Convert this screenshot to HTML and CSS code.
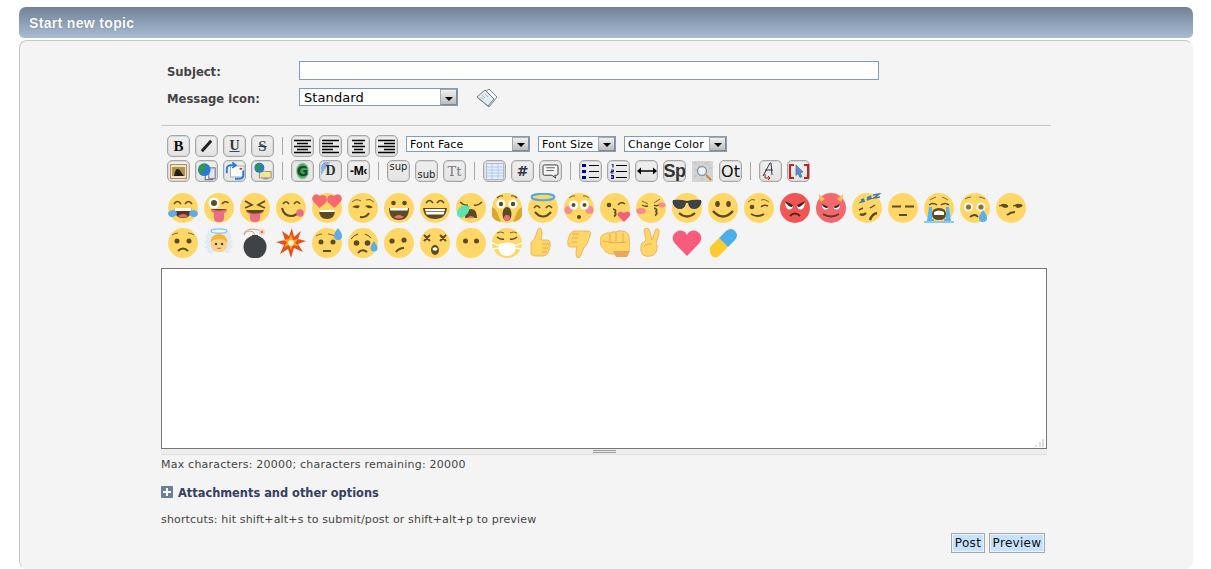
FILE: index.html
```html
<!DOCTYPE html>
<html lang="en">
<head>
<meta charset="utf-8">
<title>Start new topic</title>
<link rel="stylesheet" href="styles.css">
</head>
<body>
<svg class="defs" width="0" height="0" aria-hidden="true">
<defs>
<circle id="f" cx="15" cy="15" r="15" fill="#ffd766"/>
<circle id="fr" cx="15" cy="15" r="15" fill="#f25555"/>
<symbol id="e1" viewBox="0 0 30 30"><use href="#f"/><path d="M6 11q3.500-5 7 0M17 11q3.500-5 7 0" stroke="#5e4a22" stroke-width="1.500" fill="none"/><path d="M6.500 15h17q0 10-8.500 10t-8.500-10z" fill="#4f3a1c"/><path d="M6.500 15h17l-.6 3h-15.800z" fill="#fff"/><path d="M10 23q5-4 10 0q-5 3-10 0z" fill="#e8657b"/><path d="M0 21q0-3 4-4q4 0 5 3q-1 4-5 4q-3 0-4-3zM30 21q0-3-4-4q-4 0-5 3q1 4 5 4q3 0 4-3z" fill="#5cade8"/></symbol>
<symbol id="e2" viewBox="0 0 30 30"><use href="#f"/><circle cx="10" cy="10" r="5.500" fill="#fff"/><circle cx="10" cy="10" r="3" fill="#5e4a22"/><path d="M18 11q3-4 6.500-1" stroke="#5e4a22" stroke-width="1.600" fill="none"/><path d="M7 16h16q0 3-3 4v5q0 4-5 4t-5-4v-5q-3-1-3-4z" fill="#ea6c85"/><path d="M7 16h16q-8 3-16 0z" fill="#5e4a22"/></symbol>
<symbol id="e3" viewBox="0 0 30 30"><use href="#f"/><path d="M5 8l7 4-7 3M25 8l-7 4 7 3" stroke="#5e4a22" stroke-width="1.700" fill="none"/><path d="M6 17h18q0 3-4 4v4q0 4-5 4t-5-4v-4q-4-1-4-4z" fill="#ea6c85"/><path d="M6 17h18q-1 2-4 3q-5 1-10 0q-3-1-4-3z" fill="#5e4a22"/></symbol>
<symbol id="e4" viewBox="0 0 30 30"><use href="#f"/><path d="M7 11q3-4.500 6 0M18 11q3-4.500 6 0" stroke="#5e4a22" stroke-width="1.600" fill="none"/><path d="M6 15q2 8 9 8q6 0 9-6" stroke="#5e4a22" stroke-width="2.200" fill="none"/><circle cx="24" cy="20" r="3.800" fill="#ea6c85"/></symbol>
<symbol id="e5" viewBox="0 0 30 30"><use href="#f"/><path d="M7 17h16q0 9-8 9t-8-9z" fill="#5e4a22"/><path d="M7 17h16l-.5 2h-15z" fill="#fff"/><path d="M7.500 15L1.500 9q-3-4 .5-7q3-2 6 1q3-2 5.500 0q2.500 3 .5 6.500zM22.500 15l6-6q3-4-.5-7q-3-2-6 1q-3-2-5.500 0q-2.500 3-.5 6.500z" fill="#f66a6f"/></symbol>
<symbol id="e6" viewBox="0 0 30 30"><use href="#f"/><path d="M4 9q4-4 9-1M18 7q4-2 8 2" stroke="#5e4a22" stroke-width=".8" fill="none"/><path d="M4 14q4-3 8-1q-2 3-4 2zM17 13q4-2 8 1q-3 2-5 1z" fill="#5e4a22"/><path d="M12 24q6 1 9-4" stroke="#5e4a22" stroke-width="2" fill="none"/></symbol>
<symbol id="e7" viewBox="0 0 30 30"><use href="#f"/><circle cx="9.500" cy="10" r="2.300" fill="#5e4a22"/><circle cx="20.500" cy="10" r="2.300" fill="#5e4a22"/><path d="M5 15h20q0 12-10 12t-10-12z" fill="#5e4a22"/><path d="M6 15h18l-.4 2.500h-17.200z" fill="#fff"/><path d="M10 24q5-4 10 0q-5 3-10 0z" fill="#ea6c85"/></symbol>
<symbol id="e8" viewBox="0 0 30 30"><use href="#f"/><path d="M6 10q3.500-5 7 0M17 10q3.500-5 7 0" stroke="#5e4a22" stroke-width="1.700" fill="none"/><path d="M3 15h24q-1 11-12 11t-12-11z" fill="#5e4a22"/><path d="M5 16h20q-.5 4-1.500 5.500h-17q-1-1.500-1.500-5.500z" fill="#fff"/><path d="M5 18.500h20" stroke="#5e4a22" stroke-width=".7"/></symbol>
<symbol id="e9" viewBox="0 0 30 30"><use href="#f"/><path d="M4 9q4 4 8 3M18 12q4 1 8-3" stroke="#5e4a22" stroke-width="1.500" fill="none"/><path d="M9 25q0-9 6-9t6 9z" fill="#5e4a22"/><path d="M11 25q4-4 8 0z" fill="#ea6c85"/><path d="M1 21q0-6 5-8q5-1 8 0q-1 7-4 9q-4 4-7 2q-2-1-2-3z" fill="#5de2b0"/></symbol>
<symbol id="e10" viewBox="0 0 30 30"><use href="#f"/><path d="M5 5q3-3 6-2M19 3q3-1 6 2" stroke="#5e4a22" stroke-width="1.200" fill="none"/><circle cx="9" cy="11" r="4.500" fill="#fff"/><circle cx="21" cy="11" r="4.500" fill="#fff"/><circle cx="9" cy="11" r="2.200" fill="#5e4a22"/><circle cx="21" cy="11" r="2.200" fill="#5e4a22"/><ellipse cx="15" cy="21" rx="4.500" ry="7" fill="#5e4a22"/><ellipse cx="15" cy="25" rx="3" ry="3" fill="#ea6c85"/><path d="M0 14q3 1 5 5l4 10q-7-1-9-6zM30 14q-3 1-5 5l-4 10q7-1 9-6z" fill="#dca62f"/></symbol>
<symbol id="e11" viewBox="0 0 30 30"><use href="#f"/><path d="M6 15q3-4.500 6 0M18 15q3-4.500 6 0" stroke="#5e4a22" stroke-width="1.600" fill="none"/><path d="M7 19q8 9 16 0" stroke="#5e4a22" stroke-width="2" fill="none"/><ellipse cx="15" cy="4" rx="11.500" ry="3.200" fill="none" stroke="#4daae8" stroke-width="2"/></symbol>
<symbol id="e12" viewBox="0 0 30 30"><use href="#f"/><path d="M5 5q3-3 6-2M19 3q3-1 6 2" stroke="#5e4a22" stroke-width=".8" fill="none"/><circle cx="4.500" cy="17" r="4" fill="#f88c8c"/><circle cx="25.500" cy="17" r="4" fill="#f88c8c"/><circle cx="9.500" cy="12" r="4.500" fill="#fff"/><circle cx="20.500" cy="12" r="4.500" fill="#fff"/><circle cx="9.500" cy="12" r="2" fill="#5e4a22"/><circle cx="20.500" cy="12" r="2" fill="#5e4a22"/><circle cx="15" cy="24" r="2" fill="#5e4a22"/></symbol>
<symbol id="e13" viewBox="0 0 30 30"><use href="#f"/><circle cx="9" cy="12" r="2.300" fill="#5e4a22"/><path d="M18 12q3-4 7-1" stroke="#5e4a22" stroke-width="1.500" fill="none"/><path d="M13 16q4 1 2 3.500q2 2 -1 4" stroke="#5e4a22" stroke-width="1.800" fill="none"/><path d="M24 29l-5-5q-2.500-3 0-5q2.500-1 5 1q2.500-2 5-1q2.500 2 0 5z" fill="#f25f78"/></symbol>
<symbol id="e14" viewBox="0 0 30 30"><use href="#f"/><path d="M6 8l6 3M24 6l-6 4" stroke="#5e4a22" stroke-width=".8" fill="none"/><path d="M6 12q3 2 6 1M18 12q3 2 6-1" stroke="#5e4a22" stroke-width="1.500" fill="none"/><ellipse cx="5" cy="18" rx="4.800" ry="3" fill="#f88c8c"/><ellipse cx="26" cy="12" rx="3.500" ry="2.500" fill="#f88c8c"/><path d="M18 15q4 1 2 3.500q2 2 -1 4" stroke="#5e4a22" stroke-width="1.800" fill="none"/></symbol>
<symbol id="e15" viewBox="0 0 30 30"><use href="#f"/><path d="M1 7q7-1 14 1q7-2 14-1q1 2 0 4q-2 5-7 5q-5 0-6-6h-2q-1 6-6 6q-5 0-7-5q-1-2 0-4z" fill="#3e4347"/><path d="M7 20q8 7 16 0" stroke="#5e4a22" stroke-width="2.200" fill="none"/></symbol>
<symbol id="e16" viewBox="0 0 30 30"><use href="#f"/><ellipse cx="9.500" cy="11" rx="2.300" ry="3" fill="#5e4a22"/><ellipse cx="20.500" cy="11" rx="2.300" ry="3" fill="#5e4a22"/><path d="M5 18q10 11 20 0" stroke="#5e4a22" stroke-width="2.400" fill="none"/></symbol>
<symbol id="e17" viewBox="0 0 30 30"><use href="#f"/><path d="M4 9q4-4 7-2M17 7q3-2 8 2" stroke="#5e4a22" stroke-width=".8" fill="none"/><circle cx="8" cy="14" r="2.300" fill="#5e4a22"/><path d="M17 14q3-3 7-1" stroke="#5e4a22" stroke-width="1.600" fill="none"/><path d="M7 21q7 4 13 0" stroke="#5e4a22" stroke-width="2" fill="none"/></symbol>
<symbol id="e18" viewBox="0 0 30 30"><use href="#fr"/><path d="M5 10l8 3q-1 4-4 3.500t-4-6.500zM25 10l-8 3q1 4 4 3.500t4-6.500z" fill="#fff"/><path d="M5 8l8 4-1 2q-4 0-7-6zM25 8l-8 4 1 2q4 0 7-6z" fill="#3e2a1a"/><path d="M10 23q5-5 10 0" stroke="#4a2a1a" stroke-width="2" fill="none"/></symbol>
<symbol id="e19" viewBox="0 0 30 30"><circle cx="15" cy="15" r="15" fill="#f4676c"/><path d="M3 1q0 5 2 8l4-3zM27 1q0 5-2 8l-4-3z" fill="#f5c14e"/><path d="M6 12l7 2q-1 3-4 2.500t-3-4.500zM24 12l-7 2q1 3 4 2.500t3-4.500z" fill="#fff"/><path d="M6 11l7 3-2 1q-4 0-5-4zM24 11l-7 3 2 1q4 0 5-4z" fill="#3e2a1a"/><path d="M7 21q8 5 16 0" stroke="#5a3a22" stroke-width="2" fill="none"/></symbol>
<symbol id="e20" viewBox="0 0 30 30"><use href="#f"/><path d="M7 17l4-2M18 15l5-3" stroke="#5e4a22" stroke-width="1.400" fill="none"/><path d="M8 21q3 2 6-1M18 27q2-6 7-7" stroke="#5e4a22" stroke-width="2.400" fill="none"/><path d="M9 7l3-1-3 3 4-1M15 5l4-2-4 4 5-2M21 2l6-1-5 4 6-1" stroke="#3f7aa8" stroke-width="1.600" fill="none"/></symbol>
<symbol id="e21" viewBox="0 0 30 30"><use href="#f"/><path d="M4 13.500h9M17 13.500h9M11 22h8" stroke="#5e4a22" stroke-width="2"/></symbol>
<symbol id="e22" viewBox="0 0 30 30"><use href="#f"/><path d="M6 7q3-2 6-3M18 4q3 1 6 3" stroke="#5e4a22" stroke-width=".8" fill="none"/><path d="M5 12q4-3 8 0M17 12q4-3 8 0" stroke="#5e4a22" stroke-width="1.500" fill="none"/><path d="M8 21q0-6 7-6t7 6q0 6-7 6t-7-6z" fill="#5e4a22"/><path d="M10 19q5-3 10 0v3h-10z" fill="#fff"/><path d="M5 14h3v12h2v3H2l1-1zM25 14h-3v12h-2v3h8l-1-1z" fill="#5cb4ef"/><path d="M-1 28h32v2H-1z" fill="#8cc8f4"/></symbol>
<symbol id="e23" viewBox="0 0 30 30"><use href="#f"/><path d="M5 6q3-2 6-2M19 4q3 0 6 2" stroke="#5e4a22" stroke-width=".8" fill="none"/><circle cx="8.500" cy="14" r="4.500" fill="#fff"/><circle cx="21" cy="14" r="4.500" fill="#fff"/><circle cx="8.500" cy="14" r="2.600" fill="#a0672e"/><circle cx="21" cy="14" r="2.600" fill="#a0672e"/><path d="M10 24q5-4 8 0" stroke="#5e4a22" stroke-width="2" fill="none"/><path d="M23 17q4 5 4 8a4 4 0 0 1-8 0q0-3 4-8z" fill="#5cade8"/></symbol>
<symbol id="e24" viewBox="0 0 30 30"><use href="#f"/><path d="M3 13q4-3 8-1q1 1 .5 2q-3 1-5-.5M17 13q5-3 9-1q1 1-2 2q-3 1-4-.5" fill="#5e4a22" stroke="#5e4a22"/><path d="M11 22q4-3 8-3" stroke="#5e4a22" stroke-width="2" fill="none"/></symbol>
<symbol id="e25" viewBox="0 0 30 30"><use href="#f"/><path d="M4 7q3-2 6-2M20 5q3 0 6 2" stroke="#5e4a22" stroke-width=".8" fill="none"/><circle cx="9" cy="13" r="2.500" fill="#5e4a22"/><circle cx="21" cy="13" r="2.500" fill="#5e4a22"/><path d="M10 23q5-5 10 0" stroke="#5e4a22" stroke-width="2" fill="none"/></symbol>
<symbol id="e26" viewBox="0 0 30 30"><path d="M5 2l-4 8 2 1-3 4 3 1-3 4 4 1-1 3 7 3 9 0 7-3-1-3 4-1-3-4 3-1-3-4 2-1-4-8-5 5h-10z" fill="#e2ebf1"/><ellipse cx="15" cy="3" rx="8" ry="2.200" fill="none" stroke="#7cc4f0" stroke-width="1.300"/><circle cx="15" cy="16" r="8.500" fill="#fbd28c"/><path d="M6.500 14q1-8 8.500-8t8.500 8q-4-3-8.500-3t-8.500 3z" fill="#f5b73a"/><circle cx="12" cy="16" r="1.300" fill="#5e4a22"/><circle cx="18" cy="16" r="1.300" fill="#5e4a22"/><path d="M13 20q2 1 4 0" stroke="#b0703a" stroke-width="1" fill="none"/><path d="M9 24h12l2 5h-16z" fill="#f2f6f9"/></symbol>
<symbol id="e27" viewBox="0 0 30 30"><circle cx="15" cy="19" r="11.500" fill="#3e4347"/><path d="M12 7h6v4h-6z" fill="#3e4347"/><path d="M15 7q-1-4-5-4q-5 0-6 4M4 7q0-6 9-6q6 0 9 3" stroke="#d09a70" stroke-width=".9" fill="none"/><circle cx="22" cy="4" r="3" fill="#f6d8b0"/><circle cx="22" cy="4" r="1.300" fill="#e86a8a"/></symbol>
<symbol id="e28" viewBox="0 0 30 30"><path d="M16 0l2 9 7-6-3 8 8 2-8 3 5 8-9-4-3 10-3-9-8 5 4-9-8-3 9-2-3-9 7 5z" fill="#e6501f"/><path d="M15 6l2 6 5-1-3 4 4 3-6-1-2 5-2-5-5 2 3-5-4-2 6-1z" fill="#f9a623"/><circle cx="15" cy="15" r="3" fill="#fff3c4"/></symbol>
<symbol id="e29" viewBox="0 0 30 30"><use href="#f"/><path d="M4 8q3-2 6-2M16 6q3 0 6 2" stroke="#5e4a22" stroke-width=".8" fill="none"/><circle cx="9" cy="14" r="2.500" fill="#5e4a22"/><circle cx="21" cy="14" r="2.500" fill="#5e4a22"/><path d="M11 23h8" stroke="#5e4a22" stroke-width="2"/><path d="M26 0q4 5 4 8a4 4 0 0 1-8 0q0-3 4-8z" fill="#5cade8"/></symbol>
<symbol id="e30" viewBox="0 0 30 30"><use href="#f"/><path d="M3 11q3-4 7-5M17 6q3 1 6 4" stroke="#5e4a22" stroke-width="1" fill="none"/><circle cx="8.500" cy="15" r="2.800" fill="#5e4a22"/><circle cx="19.500" cy="15" r="2.800" fill="#5e4a22"/><path d="M10 25q4-5 9-1" stroke="#5e4a22" stroke-width="2" fill="none"/><path d="M26 13q3.500 5 3.500 7a3.500 3.500 0 0 1-7 0q0-2 3.500-7z" fill="#5cade8"/></symbol>
<symbol id="e31" viewBox="0 0 30 30"><use href="#f"/><circle cx="8" cy="13" r="2.600" fill="#5e4a22"/><circle cx="20" cy="12" r="2.600" fill="#5e4a22"/><path d="M12 24q3-4 8-4" stroke="#5e4a22" stroke-width="2" fill="none"/></symbol>
<symbol id="e32" viewBox="0 0 30 30"><use href="#f"/><path d="M4 7l6 6M10 7l-6 6M20 7l6 6M26 7l-6 6" stroke="#5e4a22" stroke-width="2"/><ellipse cx="15" cy="22" rx="4" ry="5" fill="#5e4a22"/><ellipse cx="15" cy="21" rx="2.500" ry="1.800" fill="#fff"/></symbol>
<symbol id="e33" viewBox="0 0 30 30"><use href="#f"/><circle cx="9.500" cy="13" r="2.500" fill="#5e4a22"/><circle cx="20.500" cy="13" r="2.500" fill="#5e4a22"/></symbol>
<symbol id="e34" viewBox="0 0 30 30"><use href="#f"/><path d="M5 5q4-2 7 0M18 5q3-2 7 0" stroke="#5e4a22" stroke-width=".8" fill="none"/><path d="M5 9q3 3 7 2M18 11q4 1 7-2" stroke="#5e4a22" stroke-width="1.500" fill="none"/><path d="M0 15l8 3M30 15l-8 3M1 21l7-1M29 21l-7-1" stroke="#fff" stroke-width="1.500"/><path d="M7 16q8-3 16 0v7q-2 5-8 5t-8-5z" fill="#fff"/></symbol>
<symbol id="e35" viewBox="0 0 30 30"><path d="M3 15q4-4 5-8t3-7q3 0 3 4t-1 8h7q3 1 2 4q1 2-.5 3.500q1 2-1 3.500q.5 2-1.500 3q-1 2-4 2H8q-4 0-5-2z" fill="#ffd766" stroke="#e9a85a" stroke-width=".8"/><path d="M14 16h7M14 20h6M14 24h5" stroke="#e9a85a" stroke-width="1"/></symbol>
<symbol id="e36" viewBox="0 0 30 30"><path d="M23 16q-4 4-5 8t-3 6q-3 0-3-4t1-7H6q-3-1-2-4q-1-2 .5-3.500q-1-2 1-3.500q-.5-2 1.500-3q1-2 4-2h13q2 0 3 2z" fill="#ffd766" stroke="#e9a85a" stroke-width=".8"/><path d="M8 6h7M8 10h6M8 14h5" stroke="#e9a85a" stroke-width="1"/></symbol>
<symbol id="e37" viewBox="0 0 30 30"><path d="M0 13q0-6 5-7q2-2 5-1q3-2 6-1q3-2 6-1q5 0 7 5l1 13q-1 4-6 5H12q-3 0-6-2l-5-6z" fill="#ffd766" stroke="#e9a85a" stroke-width=".8"/><path d="M10 6v8M16 5v9M23 5v9M3 13q10 3 24 1" stroke="#e9a85a" stroke-width="1" fill="none"/><path d="M13 23h17l-3 6H16z" fill="#e9a85a"/></symbol>
<symbol id="e38" viewBox="0 0 30 30"><path d="M11 0q2 0 3 4l2 8 3-9q1-3 3-2q2 1 1 4l-3 11q2 1 1 4q0 6-6 8q-5 1-8-1q-3-3-2-9q0-4 3-4l2-2-2-9q0-3 3-3z" fill="#ffd766" stroke="#e9a85a" stroke-width=".8"/><path d="M8 18q4-3 8-2" stroke="#e9a85a" stroke-width="1" fill="none"/></symbol>
<symbol id="e39" viewBox="0 0 30 30"><path d="M15 28L2.500 15Q-1 10 2 6q4-5 9-3q3 1 4 4q1-3 4-4q5-2 9 3q3 4-.5 9z" fill="#f75c7d"/></symbol>
<symbol id="e40" viewBox="0 0 30 30"><path d="M2 19l9-9 9 9-9 9q-4 3-7 0t-2-9z" fill="#fdcb2e"/><path d="M11 10l7-7q5-4 9 0t0 9l-7 7z" fill="#4daee6"/></symbol>
<symbol id="msg" viewBox="0 0 22 20"><path d="M13 1l8 8-8 10-11-9z" fill="#fff" stroke="#7b8796"/><path d="M1 9l8-7 9 9-6 7z" fill="#e4ecf4" stroke="#6b7888"/><path d="M6 7l3 3M4.500 9l3 3M9 6l3 3" stroke="#9aa6b6" stroke-width=".8"/></symbol>
<symbol id="a1" viewBox="0 0 17 14"><path d="M0 1h17M3 4h11M0 7h17M3 10h11M0 13h17" stroke="#000" stroke-width="1.300"/></symbol>
<symbol id="a2" viewBox="0 0 17 14"><path d="M0 1h17M0 4h11M0 7h17M0 10h11M0 13h17" stroke="#000" stroke-width="1.300"/></symbol>
<symbol id="a3" viewBox="0 0 17 14"><path d="M2 1h13M4 4h9M2 7h13M4 10h9M2 13h13" stroke="#000" stroke-width="1.300"/></symbol>
<symbol id="a4" viewBox="0 0 17 14"><path d="M0 1h17M6 4h11M0 7h17M6 10h11M0 13h17" stroke="#000" stroke-width="1.300"/></symbol>
<symbol id="i1" viewBox="0 0 17 15"><rect x=".5" y=".5" width="16" height="14" fill="#efe2c8" stroke="#c08a50"/><rect x="2" y="3" width="13" height="9" fill="#a8984f"/><path d="M4 12q1-6 3-7q3 0 4 3l3 4z" fill="#2a1e10"/></symbol>
<symbol id="i2" viewBox="0 0 22 20"><rect x="9" y="8" width="8" height="11" fill="#f2f2f2" stroke="#556"/><rect x="13" y="6" width="7" height="12" fill="#dfe6ee" stroke="#667"/><circle cx="8" cy="8" r="7" fill="#2a7ad8"/><path d="M3 4q3-3 6-2l1 4-4 2 1 4-3 1q-3-4-1-9z" fill="#2e9a38"/></symbol>
<symbol id="i3" viewBox="0 0 22 20"><rect x="6" y="4" width="15" height="12" fill="#fff" stroke="#9aa"/><rect x="16" y="6" width="3" height="2" fill="#d03030"/><path d="M2 12V7q0-4 5-4h4M8 0l4 3-4 3M20 9v5q0 4-5 4h-4" stroke="#2a7ad8" stroke-width="2" fill="none"/></symbol>
<symbol id="i4" viewBox="0 0 22 20"><path d="M7 10h13v7H7z" fill="#f5e39a" stroke="#9a8a50"/><path d="M8 8h5l1 2H7z" fill="#e8d070"/><circle cx="7" cy="6" r="5.500" fill="#2a7ad8"/><path d="M3 3q3-2 5-1l1 3-3 1 1 3-3 1q-2-3-1-7z" fill="#2e9a38"/><path d="M11 18h6M14 17v2" stroke="#889"/></symbol>
<symbol id="tb" viewBox="0 0 18 17"><rect x=".5" y=".5" width="17" height="16" fill="#e6eefa" stroke="#a8bcdc"/><path d="M1 4h16M1 7h16M1 10h16M1 13h16M6 1v15M12 1v15" stroke="#b8c8e6"/></symbol>
<symbol id="bb" viewBox="0 0 17 16"><path d="M2 1h13q1.500 0 1.500 1.500v8q0 1.500-1.500 1.500h-2l1 3-4-3H2q-1.500 0-1.500-1.500v-8Q.5 1 2 1z" fill="#f6f6f6" stroke="#333"/><path d="M4 4h9M4 7h8" stroke="#555"/></symbol>
<symbol id="ul" viewBox="0 0 17 15"><path d="M0 0h4v3H0zM0 6h4v3H0zM0 12h4v3H0z" fill="#000090"/><path d="M7 1.500h10M7 7.500h10M7 13.500h10" stroke="#000" stroke-width="1.200"/></symbol>
<symbol id="ol" viewBox="0 0 17 15"><path d="M1.500 0h1.500v3.500M1 6h2.500v1.500H1V9h2.500M1 11.500h2.500v3H1M1 13h2.500" stroke="#000090" fill="none"/><path d="M6 1.500h11M6 7.500h11M6 13.500h11" stroke="#000" stroke-width="1.200"/></symbol>
<symbol id="ar" viewBox="0 0 20 8"><path d="M2 4h16" stroke="#000" stroke-width="1.300"/><path d="M0 4l4-3.500v7zM20 4l-4-3.500v7z" fill="#000"/></symbol>
<symbol id="mg" viewBox="0 0 21 21"><rect width="21" height="21" fill="#d4d4d4"/><path d="M1 2h3M6 5h2M12 2h4M3 9h2M17 7h3M2 15h3M9 18h2M16 4h2" stroke="#bcbcbc"/><circle cx="10" cy="10" r="4.500" fill="#eef2f6" stroke="#8a9ab0" stroke-width="1.500"/><path d="M14 14l5 5" stroke="#c88a30" stroke-width="2"/></symbol>
<symbol id="ca" viewBox="0 0 20 19"><path d="M2 14L9 1h1l1 12M4 8h8" stroke="#334" fill="none"/><path d="M4 12v4h5M7 14l2 2-2 2" stroke="#a02020" fill="none"/></symbol>
<symbol id="sl" viewBox="0 0 20 15"><path d="M5 1H1v13h4M15 1h4v13h-4" stroke="#c82020" stroke-width="2" fill="none"/><path d="M7 1l7 7-3 .5 2 4-2 1-2-4-2 2z" fill="#5a90d8" stroke="#3a5a90" stroke-width=".6"/></symbol>
</defs>
</svg>

<div class="page">
  <h1 class="title">Start new topic</h1>
  <form class="panel">
    <div class="fields">
      <div class="field field-subject">
        <label class="label">Subject:</label>
        <input class="subject" type="text">
      </div>
      <div class="field">
        <label class="label">Message icon:</label>
        <div class="select select-icon"><span class="select-text">Standard</span><span class="arrow"></span></div>
        <svg class="msg-icon"><use href="#msg"/></svg>
      </div>
    </div>
    <div class="rule"></div>

    <div class="toolbar">
      <span class="btn t-b">B</span>
      <span class="btn"><span class="t-i"></span></span>
      <span class="btn t-u">U</span>
      <span class="btn t-s">S</span>
      <span class="sep"></span>
      <span class="btn"><svg class="ic17"><use href="#a1"/></svg></span>
      <span class="btn"><svg class="ic17"><use href="#a2"/></svg></span>
      <span class="btn"><svg class="ic17"><use href="#a3"/></svg></span>
      <span class="btn"><svg class="ic17"><use href="#a4"/></svg></span>
      <div class="select sel-face"><span class="select-text small">Font Face</span><span class="arrow"></span></div>
      <div class="select sel-size"><span class="select-text small">Font Size</span><span class="arrow"></span></div>
      <div class="select sel-color"><span class="select-text small">Change Color</span><span class="arrow"></span></div>
    </div>

    <div class="toolbar toolbar-2">
      <span class="btn"><svg class="ic17"><use href="#i1"/></svg></span>
      <span class="btn"><svg class="ic20"><use href="#i2"/></svg></span>
      <span class="btn"><svg class="ic20"><use href="#i3"/></svg></span>
      <span class="btn"><svg class="ic20"><use href="#i4"/></svg></span>
      <span class="sep"></span>
      <span class="btn t-g">G</span>
      <span class="btn t-d">D</span>
      <span class="btn t-m">-M‹</span>
      <span class="sep"></span>
      <span class="btn t-sup">sup</span>
      <span class="btn t-sub">sub</span>
      <span class="btn t-tt">Tt</span>
      <span class="sep"></span>
      <span class="btn"><svg class="ic18"><use href="#tb"/></svg></span>
      <span class="btn t-hash">#</span>
      <span class="btn"><svg class="ic17"><use href="#bb"/></svg></span>
      <span class="sep"></span>
      <span class="btn"><svg class="ic17"><use href="#ul"/></svg></span>
      <span class="btn"><svg class="ic17"><use href="#ol"/></svg></span>
      <span class="btn"><svg class="ic-ar"><use href="#ar"/></svg></span>
      <span class="btn t-sp">Sp</span>
      <span class="plain"><svg class="ic-mg"><use href="#mg"/></svg></span>
      <span class="btn t-ot">Ot</span>
      <span class="sep"></span>
      <span class="btn"><svg class="ic20"><use href="#ca"/></svg></span>
      <span class="btn"><svg class="ic20"><use href="#sl"/></svg></span>
    </div>

    <div class="emojis">
      <svg class="emoji"><use href="#e1"/></svg><svg class="emoji"><use href="#e2"/></svg><svg class="emoji"><use href="#e3"/></svg><svg class="emoji"><use href="#e4"/></svg><svg class="emoji"><use href="#e5"/></svg><svg class="emoji"><use href="#e6"/></svg><svg class="emoji"><use href="#e7"/></svg><svg class="emoji"><use href="#e8"/></svg>
      <svg class="emoji"><use href="#e9"/></svg><svg class="emoji"><use href="#e10"/></svg><svg class="emoji"><use href="#e11"/></svg><svg class="emoji"><use href="#e12"/></svg><svg class="emoji"><use href="#e13"/></svg><svg class="emoji"><use href="#e14"/></svg><svg class="emoji"><use href="#e15"/></svg><svg class="emoji"><use href="#e16"/></svg>
      <svg class="emoji"><use href="#e17"/></svg><svg class="emoji"><use href="#e18"/></svg><svg class="emoji"><use href="#e19"/></svg><svg class="emoji"><use href="#e20"/></svg><svg class="emoji"><use href="#e21"/></svg><svg class="emoji"><use href="#e22"/></svg><svg class="emoji"><use href="#e23"/></svg><svg class="emoji"><use href="#e24"/></svg>
      <svg class="emoji"><use href="#e25"/></svg><svg class="emoji"><use href="#e26"/></svg><svg class="emoji"><use href="#e27"/></svg><svg class="emoji"><use href="#e28"/></svg><svg class="emoji"><use href="#e29"/></svg><svg class="emoji"><use href="#e30"/></svg><svg class="emoji"><use href="#e31"/></svg><svg class="emoji"><use href="#e32"/></svg>
      <svg class="emoji"><use href="#e33"/></svg><svg class="emoji"><use href="#e34"/></svg><svg class="emoji"><use href="#e35"/></svg><svg class="emoji"><use href="#e36"/></svg><svg class="emoji"><use href="#e37"/></svg><svg class="emoji"><use href="#e38"/></svg><svg class="emoji"><use href="#e39"/></svg><svg class="emoji"><use href="#e40"/></svg>
    </div>

    <div class="editor">
      <textarea class="message"></textarea>
      <span class="corner"></span>
      <div class="resizer"><span class="grip"></span></div>
    </div>
    <p class="count">Max characters: 20000; characters remaining: 20000</p>
    <div class="attach"><span class="plus"></span><span>Attachments and other options</span></div>
    <p class="shortcuts">shortcuts: hit shift+alt+s to submit/post or shift+alt+p to preview</p>
    <div class="actions">
      <button class="submit submit-post" type="button">Post</button>
      <button class="submit submit-preview" type="button">Preview</button>
    </div>
  </form>
</div>
</body>
</html>
```
FILE: styles.css
```css
* { box-sizing: border-box; }
html, body { margin: 0; height: 569px; overflow: hidden; background: #fff; }
body { font-family: "DejaVu Sans", Verdana, sans-serif; font-size: 11px; color: #444; }
.defs { position: absolute; }
.page { padding: 7px 18px 0 19px; }

.title {
  margin: 0 0 2px;
  height: 31px;
  padding: 7px 10px 0;
  font: bold 14px/18px "Liberation Sans", Arial, sans-serif;
  letter-spacing: .34px;
  color: #fff;
  text-shadow: 0 0 1px #55657a;
  background: linear-gradient(#6f8298, #a9bcd3);
  border-radius: 7px 7px 5px 5px;
}

.panel {
  display: block;
  height: 529px;
  padding: 20px 0 0 141px;
  background: #f4f4f4;
  border-top: 1px solid #c8c8c8;
  border-left: 1px solid #c8c8c8;
  border-right: 1px solid #f4f4f4;
  border-bottom: 1px solid #f4f4f4;
  border-radius: 8px;
  overflow: hidden;
}

.fields { padding-left: 6px; }
.field { display: flex; align-items: flex-start; }
.field-subject { margin-bottom: 8px; }
.label {
  width: 132px;
  padding-top: 4px;
  font-weight: bold;
  font-size: 11.6px;
  line-height: 15px;
  color: #444;
}
.subject {
  display: block;
  width: 580px;
  height: 19px;
  padding: 0 3px;
  background: #fff;
  border: 1px solid #7f9db9;
  outline: 0;
}

.select {
  display: flex;
  align-items: stretch;
  background: #fff;
  border: 1px solid #7f9db9;
  color: #000;
}
.select-text { flex: 1; padding: 1px 0 0 4px; font-size: 13px; line-height: 16px; letter-spacing: .1px; }
.select-text.small { padding: 1px 0 0 3px; font-size: 11px; line-height: 14px; letter-spacing: .12px; }
.arrow {
  position: relative;
  width: 17px;
  background: linear-gradient(#f0f0f0, #bdbdbd);
  border: 1px solid #a8a8a8;
  border-right-color: #888;
  border-bottom-color: #888;
}
.arrow::after {
  content: "";
  position: absolute;
  left: 4px;
  bottom: 3px;
  border: 4px solid transparent;
  border-bottom: 0;
  border-top: 4px solid #000;
}
.select-icon { width: 159px; height: 18px; }
.msg-icon { width: 22px; height: 20px; margin-left: 18px; }

.rule { width: 890px; height: 1px; margin: 17px 0 9px; background: #c8c8c8; }

.toolbar { display: flex; align-items: flex-start; gap: 5px; margin-left: 6px; height: 22px; }
.toolbar-2 { margin-top: 3px; }
.btn {
  display: flex;
  flex: none;
  align-items: center;
  justify-content: center;
  width: 23px;
  height: 22px;
  background: linear-gradient(#efefef, #e4e4e4);
  border: 1px solid #a6a6a6;
  border-radius: 5px;
  box-shadow: inset 0 0 0 1px #d8d8d8;
  color: #222;
  overflow: hidden;
}
.plain { flex: none; width: 23px; height: 22px; display: flex; align-items: center; justify-content: center; }
.sep { flex: none; width: 1px; height: 18px; margin: 2px 3px 0; background: #aaa; }

.ic17 { width: 17px; height: 15px; }
.ic18 { width: 18px; height: 17px; }
.ic20 { width: 20px; height: 19px; }
.ic-ar { width: 20px; height: 8px; }
.ic-mg { width: 21px; height: 21px; }

.t-b { font: bold 15px "Liberation Serif", serif; color: #111; }
.t-i { display: block; width: 3px; height: 14px; background: #222; transform: rotate(42deg); }
.t-u { font: bold 14px "Liberation Serif", serif; text-decoration: underline; text-decoration-color: #24508a; color: #333; }
.t-s { font: bold 15px "Liberation Serif", serif; text-decoration: line-through; text-decoration-color: #123a66; color: #555; }
.t-g { font: bold 14px "DejaVu Sans", sans-serif; color: #1c4a28; background: radial-gradient(ellipse 7px 9px, #3ea65a 70%, #e8e8e8 100%); }
.t-d { font: bold 14px "Liberation Serif", serif; color: #333; background: linear-gradient(125deg, #e8e8e8 12%, #8db0e0 14%, #8db0e0 28%, #e8e8e8 34%); }
.t-m { font: bold 12px "Liberation Sans", sans-serif; color: #000; letter-spacing: -.4px; }
.t-sup { align-items: flex-start; font-size: 10px; line-height: 12px; color: #222; }
.t-sub { align-items: flex-end; font-size: 10px; line-height: 12px; color: #222; }
.t-tt { font: 13px "DejaVu Serif", serif; color: #777; }
.t-hash { font-weight: bold; font-size: 14px; color: #334; }
.t-sp { font: bold 18px "Liberation Sans", sans-serif; color: #333; letter-spacing: -.5px; }
.t-ot { font-size: 16px; color: #111; }

.sel-face { width: 124px; height: 16px; margin: 1px 3px 0; }
.sel-size { width: 78px; height: 16px; margin: 1px 3px 0 0; }
.sel-color { width: 103px; height: 16px; margin: 1px 0 0; }

.emojis {
  display: flex;
  flex-wrap: wrap;
  gap: 5px 6px;
  width: 860px;
  margin: 11px 0 10px 7px;
}
.emoji { width: 30px; height: 30px; flex: none; overflow: visible; }

.editor { position: relative; width: 886px; }
.message {
  display: block;
  width: 886px;
  height: 181px;
  margin: 0;
  padding: 2px;
  background: #fff;
  border: 1px solid #767676;
  border-radius: 0;
  outline: 0;
  resize: none;
}
.corner {
  position: absolute;
  right: 3px;
  top: 171px;
  width: 9px;
  height: 8px;
  background:
    linear-gradient(#ddd, #ddd) 7px 0 / 2px 8px no-repeat,
    linear-gradient(#ddd, #ddd) 4px 3px / 2px 5px no-repeat,
    linear-gradient(#ddd, #ddd) 0 6px / 2px 2px no-repeat;
}
.resizer {
  display: flex;
  justify-content: center;
  height: 6px;
  padding-top: 1px;
  background: #eee;
  border-bottom: 1px solid #ddd;
}
.grip { width: 23px; height: 3px; border-top: 1px solid #999; border-bottom: 1px solid #999; }

.count { margin: 3px 0 0; font-size: 11px; line-height: 14px; letter-spacing: .22px; }
.attach {
  display: flex;
  align-items: center;
  gap: 5px;
  margin-top: 13px;
  font-weight: bold;
  font-size: 11.4px;
  line-height: 16px;
  color: #334060;
}
.plus {
  width: 12px;
  height: 12px;
  margin-top: -3px;
  background:
    linear-gradient(#fff, #fff) center / 8px 2px no-repeat,
    linear-gradient(#fff, #fff) center / 2px 8px no-repeat,
    #6a7f9c;
  border-radius: 1px;
}
.shortcuts { margin: 12px 0 0; font-size: 11px; line-height: 14px; letter-spacing: .16px; }
.actions { display: flex; justify-content: flex-end; gap: 4px; width: 884px; margin-top: 6px; }
.submit {
  height: 20px;
  margin: 0;
  padding: 0;
  font: 12px/16px "DejaVu Sans", sans-serif;
  letter-spacing: .3px;
  color: #111;
  background: #c7e2fb;
  border: 1px solid #a8a8a8;
  border-radius: 0;
  box-shadow: inset 0 0 0 1px #eaf3fb;
}
.submit-post { width: 34px; }
.submit-preview { width: 56px; }
```
